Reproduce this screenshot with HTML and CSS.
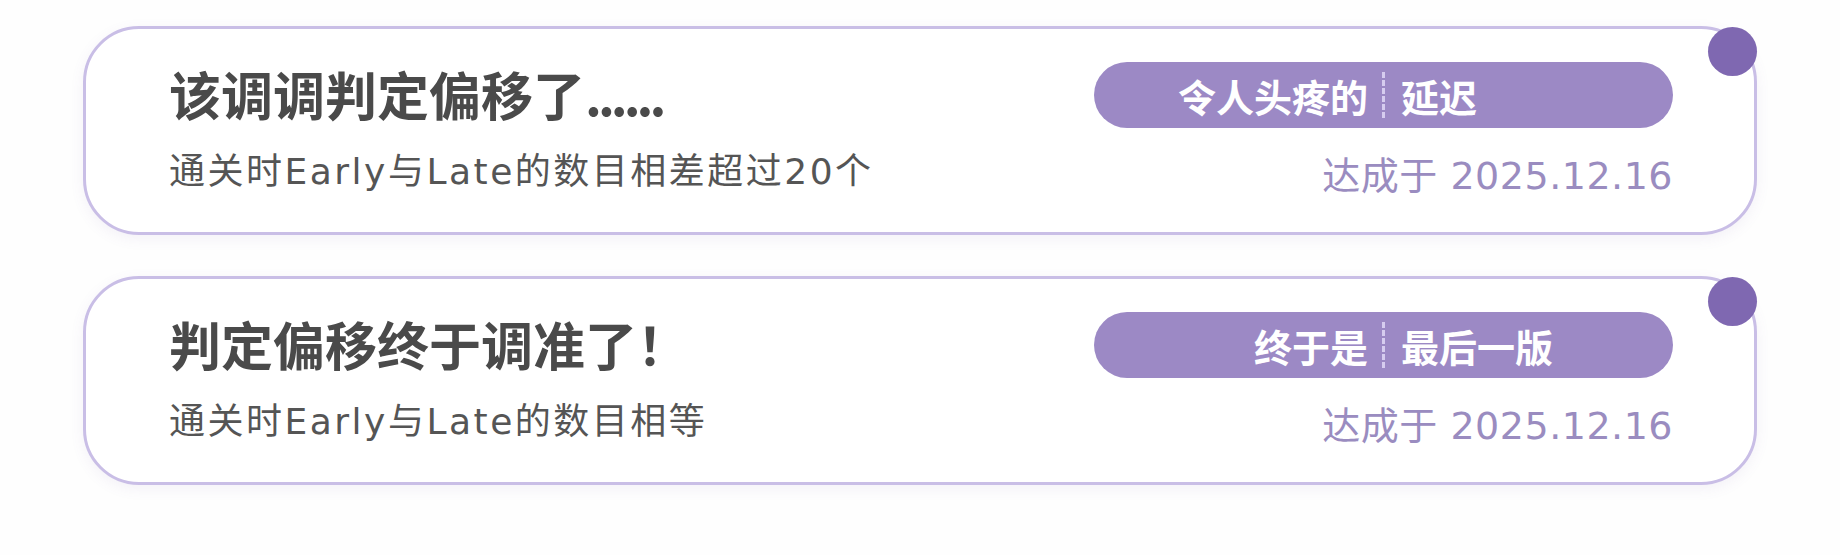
FILE: index.html
```html
<html>
<head>
    <meta charset="UTF-8">
    <meta name="viewport" content="width=device-width, initial-scale=1.0">
    <title>成就</title>
    <link rel="stylesheet" href="styles.css">
</head>
<body>
    <div class="achievement-list">
        <div class="achievement">
            <span class="dot"></span>
            <div class="info">
                <div class="title">该调调判定偏移了<span class="ellipsis">......</span></div>
                <div class="desc">通关时Early与Late的数目相差超过20个</div>
            </div>
            <div class="meta">
                <div class="tag">
                    <span class="tag-left">令人头疼的</span>
                    <span class="tag-sep"></span>
                    <span class="tag-right">延迟</span>
                </div>
                <div class="date">达成于 2025.12.16</div>
            </div>
        </div>

        <div class="achievement">
            <span class="dot"></span>
            <div class="info">
                <div class="title">判定偏移终于调准了！</div>
                <div class="desc">通关时Early与Late的数目相等</div>
            </div>
            <div class="meta">
                <div class="tag">
                    <span class="tag-left">终于是</span>
                    <span class="tag-sep"></span>
                    <span class="tag-right">最后一版</span>
                </div>
                <div class="date">达成于 2025.12.16</div>
            </div>
        </div>
    </div>
</body>
</html>
```

FILE: styles.css
```css
body { margin: 0; background: #fefefe; font-family: "Noto Sans CJK SC", "Noto Sans", sans-serif; }
.achievement-list { display: flex; flex-direction: column; gap: 41px; padding: 26px 83px; }
.achievement { position: relative; display: flex; justify-content: space-between; box-sizing: border-box; height: 209px; padding: 33px 81px 0 83px; background: #fff; border: 3px solid #c9bee6; border-radius: 56px; box-shadow: 0 4px 14px rgba(110, 90, 160, 0.08); }
.dot { position: absolute; top: -2px; right: -3px; width: 49px; height: 49px; border-radius: 50%; background: #7f68b1; }
.info { display: flex; flex-direction: column; padding-top: 1px; }
.title { font-size: 52px; font-weight: bold; line-height: 62px; color: #4a4a4a; }
.ellipsis { letter-spacing: -4px; }
.desc { margin-top: 25px; font-family: "DejaVu Sans", "Noto Sans CJK SC", sans-serif; font-size: 36px; letter-spacing: 2.5px; line-height: 44px; color: #555; }
.meta { width: 579px; display: flex; flex-direction: column; }
.tag { display: grid; grid-template-columns: 1fr auto 1fr; align-items: center; height: 66px; background: #9c89c5; border-radius: 33px; color: #fff; font-size: 38px; font-weight: bold; }
.tag-left { text-align: right; padding-right: 14px; }
.tag-right { text-align: left; padding-left: 16px; }
.tag-sep { height: 46px; border-left: 3px dashed #d6ccef; }
.date { margin-top: 26px; text-align: right; font-family: "DejaVu Sans", "Noto Sans CJK SC", sans-serif; font-size: 38px; letter-spacing: 0.5px; line-height: 44px; color: #9a8cc0; }
```
